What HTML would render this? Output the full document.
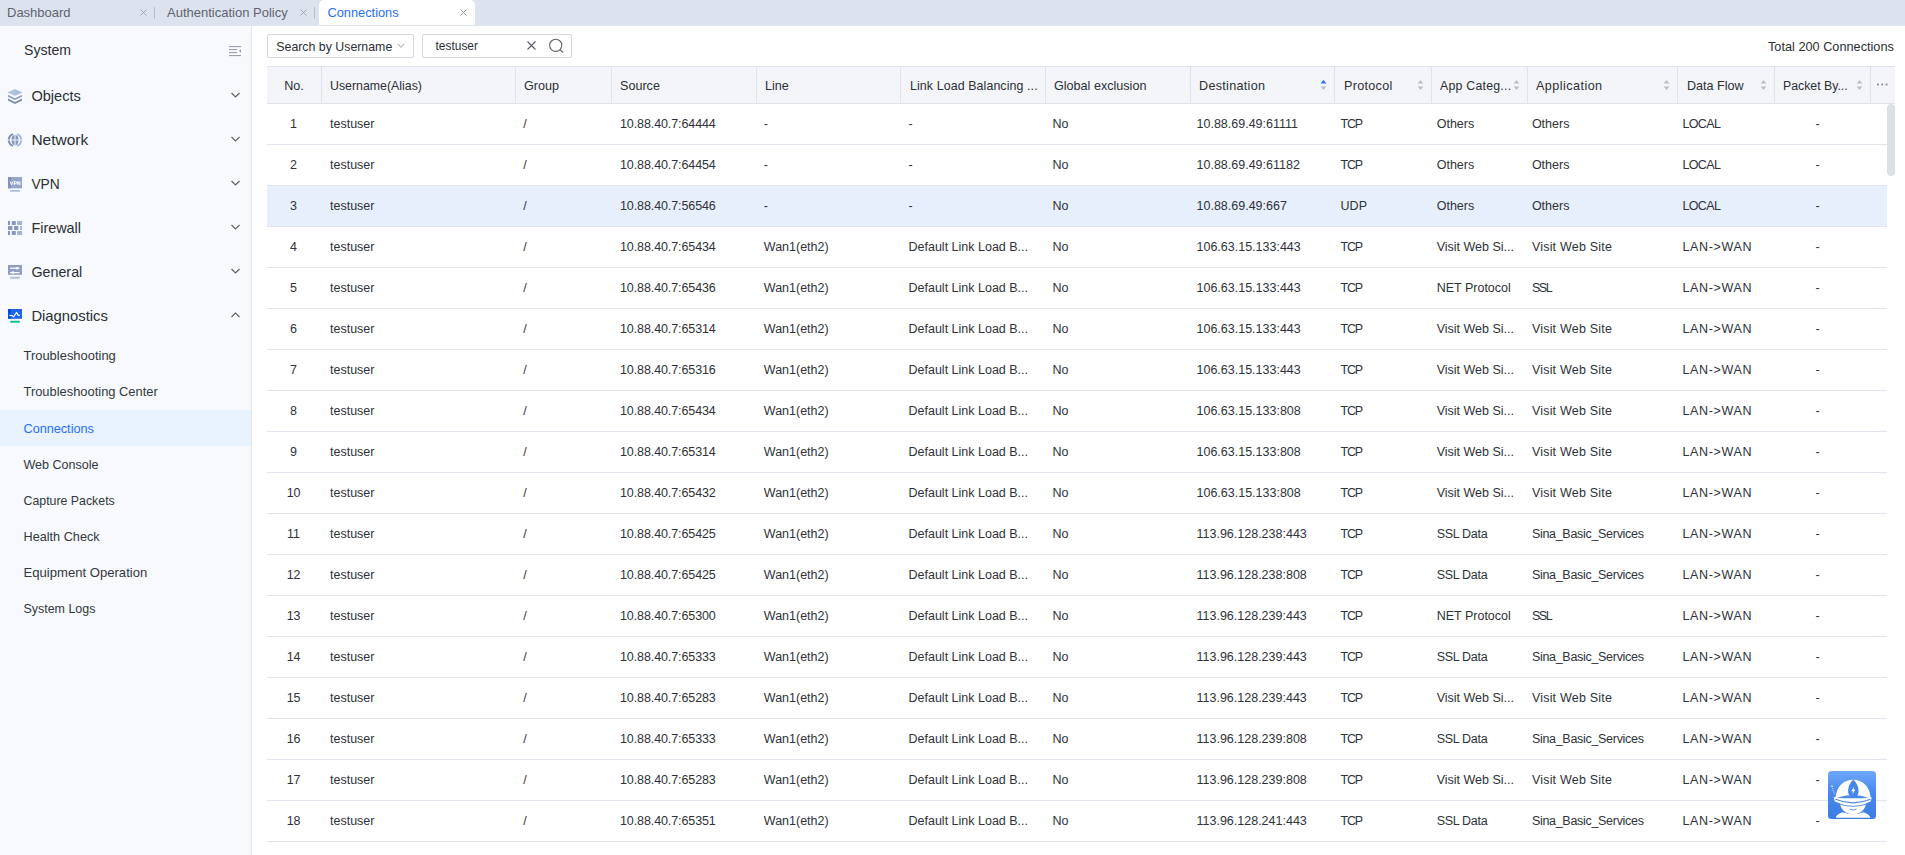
<!DOCTYPE html>
<html><head><meta charset="utf-8"><style>
*{margin:0;padding:0;box-sizing:border-box}
html,body{width:1905px;height:855px;overflow:hidden;background:#fff;font-family:"Liberation Sans",sans-serif;color:#333}
.t{position:absolute;white-space:nowrap}
</style></head><body>
<div style="position:absolute;left:0;top:0;width:1905px;height:25px;background:#dde3ee"></div>
<div style="position:absolute;left:0;top:25px;width:1905px;height:1px;background:#e0e6f1"></div>
<div style="position:absolute;left:319px;top:0;width:156px;height:25px;background:#fff;border-radius:5px 5px 0 0"></div>
<div class="t" style="left:7.00px;top:6.00px;font-size:13px;line-height:13px;color:#5d6470;">Dashboard</div>
<svg style="position:absolute;left:139.5px;top:9px" width="7" height="7" viewBox="0 0 7 7"><path d="M0.5 0.5L6.5 6.5M6.5 0.5L0.5 6.5" stroke="#a3a9b3" stroke-width="1" fill="none"/></svg>
<div style="position:absolute;left:154px;top:7px;width:1px;height:12px;background:#b8bfca"></div>
<div class="t" style="left:167.00px;top:6.00px;font-size:13px;line-height:13px;color:#5d6470;">Authentication Policy</div>
<svg style="position:absolute;left:299.5px;top:9px" width="7" height="7" viewBox="0 0 7 7"><path d="M0.5 0.5L6.5 6.5M6.5 0.5L0.5 6.5" stroke="#a3a9b3" stroke-width="1" fill="none"/></svg>
<div style="position:absolute;left:314px;top:7px;width:1px;height:12px;background:#b8bfca"></div>
<div class="t" style="left:327.50px;top:7.16px;font-size:12.8px;line-height:12.8px;color:#1f6ffb;">Connections</div>
<svg style="position:absolute;left:459.5px;top:9px" width="7" height="7" viewBox="0 0 7 7"><path d="M0.5 0.5L6.5 6.5M6.5 0.5L0.5 6.5" stroke="#8c939e" stroke-width="1" fill="none"/></svg>
<div style="position:absolute;left:0;top:26px;width:251px;height:829px;background:#f7f9fc"></div>
<div style="position:absolute;left:251px;top:26px;width:1px;height:829px;background:#e3e6ed"></div>
<div class="t" style="left:24.00px;top:43.06px;font-size:14.1px;line-height:14.1px;color:#2b2f36;">System</div>
<svg style="position:absolute;left:228px;top:45px" width="14" height="12" viewBox="0 0 14 12"><g fill="#9aa0ad"><rect x="1" y="1" width="12" height="1.1"/><rect x="1" y="4" width="8" height="1.1"/><rect x="1" y="7" width="8" height="1.1"/><rect x="1" y="10" width="12" height="1.1"/><path d="M13 4L11 6L13 8Z"/></g></svg>
<div class="t" style="left:31.40px;top:88.94px;font-size:14.6px;line-height:14.6px;color:#2b2f36;">Objects</div>
<svg style="position:absolute;left:229.5px;top:89.9px" width="11" height="10" viewBox="0 0 11 10"><path d="M1.5 3L5.5 7L9.5 3" stroke="#5b626e" stroke-width="1.2" fill="none"/></svg>
<div class="t" style="left:31.40px;top:132.18px;font-size:15.5px;line-height:15.5px;color:#2b2f36;">Network</div>
<svg style="position:absolute;left:229.5px;top:133.9px" width="11" height="10" viewBox="0 0 11 10"><path d="M1.5 3L5.5 7L9.5 3" stroke="#5b626e" stroke-width="1.2" fill="none"/></svg>
<div class="t" style="left:31.40px;top:177.62px;font-size:13.8px;line-height:13.8px;color:#2b2f36;">VPN</div>
<svg style="position:absolute;left:229.5px;top:177.9px" width="11" height="10" viewBox="0 0 11 10"><path d="M1.5 3L5.5 7L9.5 3" stroke="#5b626e" stroke-width="1.2" fill="none"/></svg>
<div class="t" style="left:31.40px;top:221.11px;font-size:14.4px;line-height:14.4px;color:#2b2f36;">Firewall</div>
<svg style="position:absolute;left:229.5px;top:221.9px" width="11" height="10" viewBox="0 0 11 10"><path d="M1.5 3L5.5 7L9.5 3" stroke="#5b626e" stroke-width="1.2" fill="none"/></svg>
<div class="t" style="left:31.40px;top:265.20px;font-size:14.3px;line-height:14.3px;color:#2b2f36;">General</div>
<svg style="position:absolute;left:229.5px;top:265.9px" width="11" height="10" viewBox="0 0 11 10"><path d="M1.5 3L5.5 7L9.5 3" stroke="#5b626e" stroke-width="1.2" fill="none"/></svg>
<div class="t" style="left:31.40px;top:308.77px;font-size:14.8px;line-height:14.8px;color:#2b2f36;">Diagnostics</div>
<svg style="position:absolute;left:229.5px;top:309.9px" width="11" height="10" viewBox="0 0 11 10"><path d="M1.5 7L5.5 3L9.5 7" stroke="#5b626e" stroke-width="1.2" fill="none"/></svg>
<svg style="position:absolute;left:7px;top:88px" width="16" height="16" viewBox="0 0 16 16"><path d="M8 1L15.5 4.4L8 7.8L0.5 4.4Z" fill="#adc0df"/><path d="M1 6.8L8 10.2L15 6.8L15 8.7L8 12.1L1 8.7Z" fill="#8e9fc3"/><path d="M1 10.6L8 14L15 10.6L15 12.5L8 15.9L1 12.5Z" fill="#7b8bb1"/></svg>
<svg style="position:absolute;left:7px;top:132px" width="16" height="16" viewBox="0 0 16 16"><path d="M6.1 2.1A6.2 6.2 0 0 0 6.1 13.9" stroke="#7d8db3" stroke-width="2" fill="none"/><path d="M9.9 2.1A6.2 6.2 0 0 1 9.9 13.9" stroke="#a6badb" stroke-width="2" fill="none"/><ellipse cx="8" cy="8" rx="3.6" ry="5.3" fill="#8797bb"/><rect x="7.4" y="2" width="1.2" height="12" fill="#e3e8f2"/><rect x="1" y="7.4" width="14" height="1.2" fill="#e3e8f2"/></svg>
<svg style="position:absolute;left:8px;top:177px" width="14" height="16" viewBox="0 0 14 16"><rect x="0" y="0" width="14" height="11.3" fill="#96a6c8"/><rect x="0" y="0" width="3" height="11.3" fill="#8191b7"/><path d="M2.2 4.5L3.5 7.9L4.8 4.5M6.3 7.9V4.6H7.5Q8.6 4.6 8.6 5.6Q8.6 6.6 7.5 6.6H6.3M9.7 7.9V4.5L11.9 7.9V4.5" stroke="#fff" stroke-width="1" fill="none"/><rect x="2" y="13" width="10" height="1.8" rx="0.9" fill="#a9bedf"/></svg>
<svg style="position:absolute;left:8px;top:221px" width="14" height="14" viewBox="0 0 14 14"><g fill="#8898bd"><rect x="0" y="0" width="2" height="4"/><rect x="3.8" y="0" width="4" height="4"/><rect x="9.2" y="0" width="4.8" height="4" fill="#9fb2d6"/><rect x="0" y="5" width="4.4" height="4"/><rect x="6" y="5" width="4.3" height="4"/><rect x="12" y="5" width="2" height="4" fill="#a9bcdc"/><rect x="0" y="10" width="2" height="4"/><rect x="3.8" y="10" width="4" height="4"/><rect x="9.2" y="10" width="4.8" height="4" fill="#9fb2d6"/></g></svg>
<svg style="position:absolute;left:8px;top:265px" width="14" height="15" viewBox="0 0 14 15"><rect x="0" y="0" width="14" height="9.8" fill="#8e9ec2"/><rect x="2" y="2.6" width="9.5" height="1.2" fill="#fff"/><circle cx="9" cy="3.2" r="1.3" fill="#fff"/><rect x="2" y="7" width="9.5" height="1.2" fill="#fff"/><circle cx="5" cy="7.6" r="1.3" fill="#fff"/><rect x="2" y="11.8" width="10" height="2" rx="1" fill="#aabfdf"/></svg>
<svg style="position:absolute;left:8px;top:309px" width="14" height="15" viewBox="0 0 14 15"><rect x="0" y="0" width="14" height="9.8" fill="#1f63f3"/><rect x="0" y="0" width="3" height="9.8" fill="#0b4ddb"/><path d="M1.5 6.4L4.1 6.6L5.7 7.8L8.5 3.4L10.3 6.4L11.9 6.4" stroke="#fff" stroke-width="1.1" fill="none" stroke-linejoin="round"/><rect x="2" y="11.8" width="10" height="2" rx="1" fill="#13c783"/></svg>
<div style="position:absolute;left:0;top:410px;width:251px;height:36px;background:#e8f3fe"></div>
<div class="t" style="left:23.50px;top:350.34px;font-size:12.95px;line-height:12.95px;color:#333840;">Troubleshooting</div>
<div class="t" style="left:23.50px;top:386.38px;font-size:12.9px;line-height:12.9px;color:#333840;">Troubleshooting Center</div>
<div class="t" style="left:23.50px;top:422.58px;font-size:12.66px;line-height:12.66px;color:#1e6ffd;">Connections</div>
<div class="t" style="left:23.50px;top:458.68px;font-size:12.55px;line-height:12.55px;color:#333840;">Web Console</div>
<div class="t" style="left:23.50px;top:494.85px;font-size:12.35px;line-height:12.35px;color:#333840;">Capture Packets</div>
<div class="t" style="left:23.50px;top:530.55px;font-size:12.7px;line-height:12.7px;color:#333840;">Health Check</div>
<div class="t" style="left:23.50px;top:566.21px;font-size:13.1px;line-height:13.1px;color:#333840;">Equipment Operation</div>
<div class="t" style="left:23.50px;top:602.76px;font-size:12.45px;line-height:12.45px;color:#333840;">System Logs</div>
<div style="position:absolute;left:267px;top:34px;width:147px;height:24px;border:1px solid #d5d9e1;border-radius:2px;background:#fff"></div>
<div class="t" style="left:276.30px;top:40.55px;font-size:12.35px;line-height:12.35px;color:#2b2f36;">Search by Username</div>
<svg style="position:absolute;left:397px;top:43px" width="8" height="6" viewBox="0 0 8 6"><path d="M0.8 1L4 4.4L7.2 1" stroke="#9ba1ab" stroke-width="1" fill="none"/></svg>
<div style="position:absolute;left:422px;top:34px;width:150px;height:24px;border:1px solid #d5d9e1;border-radius:2px;background:#fff"></div>
<div class="t" style="left:435.50px;top:41.38px;font-size:11.95px;line-height:11.95px;color:#2b2f36;">testuser</div>
<svg style="position:absolute;left:527px;top:41px" width="9" height="9" viewBox="0 0 9 9"><path d="M0.5 0.5L8.5 8.5M8.5 0.5L0.5 8.5" stroke="#595f69" stroke-width="1.1" fill="none"/></svg>
<svg style="position:absolute;left:548px;top:38px" width="17" height="16" viewBox="0 0 17 16"><circle cx="7.7" cy="7.3" r="6.1" stroke="#60666f" stroke-width="1.1" fill="none"/><path d="M12 11.6L15 14.5" stroke="#60666f" stroke-width="1.2"/></svg>
<div class="t" style="left:1768.00px;top:40.92px;font-size:12.73px;line-height:12.73px;color:#2b2f36;">Total 200 Connections</div>
<div style="position:absolute;left:267px;top:66px;width:1628px;height:38px;background:#f4f5f9;border-top:1px solid #dfe3ec;border-bottom:1px solid #dfe3ec"></div>
<div style="position:absolute;left:321px;top:67px;width:1px;height:36px;background:#dfe3ec"></div>
<div style="position:absolute;left:515px;top:67px;width:1px;height:36px;background:#dfe3ec"></div>
<div style="position:absolute;left:611px;top:67px;width:1px;height:36px;background:#dfe3ec"></div>
<div style="position:absolute;left:756px;top:67px;width:1px;height:36px;background:#dfe3ec"></div>
<div style="position:absolute;left:900px;top:67px;width:1px;height:36px;background:#dfe3ec"></div>
<div style="position:absolute;left:1045px;top:67px;width:1px;height:36px;background:#dfe3ec"></div>
<div style="position:absolute;left:1190px;top:67px;width:1px;height:36px;background:#dfe3ec"></div>
<div style="position:absolute;left:1334px;top:67px;width:1px;height:36px;background:#dfe3ec"></div>
<div style="position:absolute;left:1431px;top:67px;width:1px;height:36px;background:#dfe3ec"></div>
<div style="position:absolute;left:1527px;top:67px;width:1px;height:36px;background:#dfe3ec"></div>
<div style="position:absolute;left:1677px;top:67px;width:1px;height:36px;background:#dfe3ec"></div>
<div style="position:absolute;left:1774px;top:67px;width:1px;height:36px;background:#dfe3ec"></div>
<div style="position:absolute;left:1870px;top:67px;width:1px;height:36px;background:#dfe3ec"></div>
<div class="t" style="left:267.00px;top:79.53px;font-size:12.6px;line-height:12.6px;color:#2b2f36;width:54px;text-align:center;">No.</div>
<div class="t" style="left:330.00px;top:79.75px;font-size:12.35px;line-height:12.35px;color:#2b2f36;">Username(Alias)</div>
<div class="t" style="left:524.00px;top:79.53px;font-size:12.6px;line-height:12.6px;color:#2b2f36;">Group</div>
<div class="t" style="left:620.00px;top:79.53px;font-size:12.6px;line-height:12.6px;color:#2b2f36;">Source</div>
<div class="t" style="left:765.00px;top:79.53px;font-size:12.6px;line-height:12.6px;color:#2b2f36;">Line</div>
<div class="t" style="left:910.00px;top:79.70px;font-size:12.4px;line-height:12.4px;color:#2b2f36;letter-spacing:0.1px;">Link Load Balancing ...</div>
<div class="t" style="left:1054.00px;top:79.53px;font-size:12.6px;line-height:12.6px;color:#2b2f36;">Global exclusion</div>
<div class="t" style="left:1199.00px;top:79.53px;font-size:12.6px;line-height:12.6px;color:#2b2f36;letter-spacing:0.3px;">Destination</div>
<svg style="position:absolute;left:1320px;top:78.6px" width="7" height="12" viewBox="0 0 7 12"><path d="M3.5 1L6.5 4.6H0.5Z" fill="#2f6df6"/><path d="M3.5 11L6.5 7.4H0.5Z" fill="#b9bec7"/></svg>
<div class="t" style="left:1344.00px;top:79.53px;font-size:12.6px;line-height:12.6px;color:#2b2f36;letter-spacing:0.3px;">Protocol</div>
<svg style="position:absolute;left:1417px;top:78.6px" width="7" height="12" viewBox="0 0 7 12"><path d="M3.5 1L6.5 4.6H0.5Z" fill="#b9bec7"/><path d="M3.5 11L6.5 7.4H0.5Z" fill="#b9bec7"/></svg>
<div class="t" style="left:1440.00px;top:79.79px;font-size:12.3px;line-height:12.3px;color:#2b2f36;letter-spacing:0.25px;">App Categ...</div>
<svg style="position:absolute;left:1513px;top:78.6px" width="7" height="12" viewBox="0 0 7 12"><path d="M3.5 1L6.5 4.6H0.5Z" fill="#b9bec7"/><path d="M3.5 11L6.5 7.4H0.5Z" fill="#b9bec7"/></svg>
<div class="t" style="left:1536.00px;top:79.53px;font-size:12.6px;line-height:12.6px;color:#2b2f36;letter-spacing:0.45px;">Application</div>
<svg style="position:absolute;left:1663px;top:78.6px" width="7" height="12" viewBox="0 0 7 12"><path d="M3.5 1L6.5 4.6H0.5Z" fill="#b9bec7"/><path d="M3.5 11L6.5 7.4H0.5Z" fill="#b9bec7"/></svg>
<div class="t" style="left:1687.00px;top:79.53px;font-size:12.6px;line-height:12.6px;color:#2b2f36;">Data Flow</div>
<svg style="position:absolute;left:1760px;top:78.6px" width="7" height="12" viewBox="0 0 7 12"><path d="M3.5 1L6.5 4.6H0.5Z" fill="#b9bec7"/><path d="M3.5 11L6.5 7.4H0.5Z" fill="#b9bec7"/></svg>
<div class="t" style="left:1783.00px;top:79.79px;font-size:12.3px;line-height:12.3px;color:#2b2f36;">Packet By...</div>
<svg style="position:absolute;left:1856px;top:78.6px" width="7" height="12" viewBox="0 0 7 12"><path d="M3.5 1L6.5 4.6H0.5Z" fill="#b9bec7"/><path d="M3.5 11L6.5 7.4H0.5Z" fill="#b9bec7"/></svg>
<svg style="position:absolute;left:1876px;top:83px" width="12" height="3" viewBox="0 0 12 3"><g fill="#80868f"><rect x="1" y="0.6" width="1.8" height="1.8"/><rect x="5.3" y="0.6" width="1.8" height="1.8"/><rect x="9.6" y="0.6" width="1.8" height="1.8"/></g></svg>
<div style="position:absolute;left:267px;top:104px;width:1620px;height:40px;background:#fff"></div>
<div style="position:absolute;left:267px;top:144px;width:1620px;height:1px;background:#e0e4ed"></div>
<div class="t" style="left:273.60px;top:118.12px;font-size:12.5px;line-height:12.5px;color:#2e3239;width:40px;text-align:center;">1</div>
<div class="t" style="left:330.00px;top:118.12px;font-size:12.5px;line-height:12.5px;color:#2e3239;">testuser</div>
<div class="t" style="left:523.30px;top:118.12px;font-size:12.5px;line-height:12.5px;color:#2e3239;">/</div>
<div class="t" style="left:620.00px;top:118.12px;font-size:12.5px;line-height:12.5px;color:#2e3239;letter-spacing:-0.1px;">10.88.40.7:64444</div>
<div class="t" style="left:763.80px;top:118.12px;font-size:12.5px;line-height:12.5px;color:#2e3239;">-</div>
<div class="t" style="left:908.50px;top:118.12px;font-size:12.5px;line-height:12.5px;color:#2e3239;">-</div>
<div class="t" style="left:1052.40px;top:118.12px;font-size:12.5px;line-height:12.5px;color:#2e3239;">No</div>
<div class="t" style="left:1196.50px;top:118.12px;font-size:12.5px;line-height:12.5px;color:#2e3239;">10.88.69.49:61111</div>
<div class="t" style="left:1340.60px;top:118.12px;font-size:12.5px;line-height:12.5px;color:#2e3239;letter-spacing:-1.2px;">TCP</div>
<div class="t" style="left:1436.70px;top:118.12px;font-size:12.5px;line-height:12.5px;color:#2e3239;">Others</div>
<div class="t" style="left:1531.90px;top:118.12px;font-size:12.5px;line-height:12.5px;color:#2e3239;">Others</div>
<div class="t" style="left:1682.40px;top:118.12px;font-size:12.5px;line-height:12.5px;color:#2e3239;letter-spacing:-0.6px;">LOCAL</div>
<div class="t" style="left:1797.50px;top:118.12px;font-size:12.5px;line-height:12.5px;color:#2e3239;width:40px;text-align:center;">-</div>
<div style="position:absolute;left:267px;top:145px;width:1620px;height:40px;background:#fff"></div>
<div style="position:absolute;left:267px;top:185px;width:1620px;height:1px;background:#e0e4ed"></div>
<div class="t" style="left:273.60px;top:159.12px;font-size:12.5px;line-height:12.5px;color:#2e3239;width:40px;text-align:center;">2</div>
<div class="t" style="left:330.00px;top:159.12px;font-size:12.5px;line-height:12.5px;color:#2e3239;">testuser</div>
<div class="t" style="left:523.30px;top:159.12px;font-size:12.5px;line-height:12.5px;color:#2e3239;">/</div>
<div class="t" style="left:620.00px;top:159.12px;font-size:12.5px;line-height:12.5px;color:#2e3239;letter-spacing:-0.1px;">10.88.40.7:64454</div>
<div class="t" style="left:763.80px;top:159.12px;font-size:12.5px;line-height:12.5px;color:#2e3239;">-</div>
<div class="t" style="left:908.50px;top:159.12px;font-size:12.5px;line-height:12.5px;color:#2e3239;">-</div>
<div class="t" style="left:1052.40px;top:159.12px;font-size:12.5px;line-height:12.5px;color:#2e3239;">No</div>
<div class="t" style="left:1196.50px;top:159.12px;font-size:12.5px;line-height:12.5px;color:#2e3239;">10.88.69.49:61182</div>
<div class="t" style="left:1340.60px;top:159.12px;font-size:12.5px;line-height:12.5px;color:#2e3239;letter-spacing:-1.2px;">TCP</div>
<div class="t" style="left:1436.70px;top:159.12px;font-size:12.5px;line-height:12.5px;color:#2e3239;">Others</div>
<div class="t" style="left:1531.90px;top:159.12px;font-size:12.5px;line-height:12.5px;color:#2e3239;">Others</div>
<div class="t" style="left:1682.40px;top:159.12px;font-size:12.5px;line-height:12.5px;color:#2e3239;letter-spacing:-0.6px;">LOCAL</div>
<div class="t" style="left:1797.50px;top:159.12px;font-size:12.5px;line-height:12.5px;color:#2e3239;width:40px;text-align:center;">-</div>
<div style="position:absolute;left:267px;top:186px;width:1620px;height:40px;background:#e8effc"></div>
<div style="position:absolute;left:267px;top:226px;width:1620px;height:1px;background:#e0e4ed"></div>
<div class="t" style="left:273.60px;top:200.12px;font-size:12.5px;line-height:12.5px;color:#2e3239;width:40px;text-align:center;">3</div>
<div class="t" style="left:330.00px;top:200.12px;font-size:12.5px;line-height:12.5px;color:#2e3239;">testuser</div>
<div class="t" style="left:523.30px;top:200.12px;font-size:12.5px;line-height:12.5px;color:#2e3239;">/</div>
<div class="t" style="left:620.00px;top:200.12px;font-size:12.5px;line-height:12.5px;color:#2e3239;letter-spacing:-0.1px;">10.88.40.7:56546</div>
<div class="t" style="left:763.80px;top:200.12px;font-size:12.5px;line-height:12.5px;color:#2e3239;">-</div>
<div class="t" style="left:908.50px;top:200.12px;font-size:12.5px;line-height:12.5px;color:#2e3239;">-</div>
<div class="t" style="left:1052.40px;top:200.12px;font-size:12.5px;line-height:12.5px;color:#2e3239;">No</div>
<div class="t" style="left:1196.50px;top:200.12px;font-size:12.5px;line-height:12.5px;color:#2e3239;">10.88.69.49:667</div>
<div class="t" style="left:1340.60px;top:200.12px;font-size:12.5px;line-height:12.5px;color:#2e3239;">UDP</div>
<div class="t" style="left:1436.70px;top:200.12px;font-size:12.5px;line-height:12.5px;color:#2e3239;">Others</div>
<div class="t" style="left:1531.90px;top:200.12px;font-size:12.5px;line-height:12.5px;color:#2e3239;">Others</div>
<div class="t" style="left:1682.40px;top:200.12px;font-size:12.5px;line-height:12.5px;color:#2e3239;letter-spacing:-0.6px;">LOCAL</div>
<div class="t" style="left:1797.50px;top:200.12px;font-size:12.5px;line-height:12.5px;color:#2e3239;width:40px;text-align:center;">-</div>
<div style="position:absolute;left:267px;top:227px;width:1620px;height:40px;background:#fff"></div>
<div style="position:absolute;left:267px;top:267px;width:1620px;height:1px;background:#e0e4ed"></div>
<div class="t" style="left:273.60px;top:241.12px;font-size:12.5px;line-height:12.5px;color:#2e3239;width:40px;text-align:center;">4</div>
<div class="t" style="left:330.00px;top:241.12px;font-size:12.5px;line-height:12.5px;color:#2e3239;">testuser</div>
<div class="t" style="left:523.30px;top:241.12px;font-size:12.5px;line-height:12.5px;color:#2e3239;">/</div>
<div class="t" style="left:620.00px;top:241.12px;font-size:12.5px;line-height:12.5px;color:#2e3239;letter-spacing:-0.1px;">10.88.40.7:65434</div>
<div class="t" style="left:763.80px;top:241.12px;font-size:12.5px;line-height:12.5px;color:#2e3239;">Wan1(eth2)</div>
<div class="t" style="left:908.50px;top:241.12px;font-size:12.5px;line-height:12.5px;color:#2e3239;">Default Link Load B...</div>
<div class="t" style="left:1052.40px;top:241.12px;font-size:12.5px;line-height:12.5px;color:#2e3239;">No</div>
<div class="t" style="left:1196.50px;top:241.12px;font-size:12.5px;line-height:12.5px;color:#2e3239;">106.63.15.133:443</div>
<div class="t" style="left:1340.60px;top:241.12px;font-size:12.5px;line-height:12.5px;color:#2e3239;letter-spacing:-1.2px;">TCP</div>
<div class="t" style="left:1436.70px;top:241.12px;font-size:12.5px;line-height:12.5px;color:#2e3239;">Visit Web Si...</div>
<div class="t" style="left:1531.90px;top:241.12px;font-size:12.5px;line-height:12.5px;color:#2e3239;letter-spacing:0.2px;">Visit Web Site</div>
<div class="t" style="left:1682.40px;top:241.12px;font-size:12.5px;line-height:12.5px;color:#2e3239;letter-spacing:0.65px;">LAN-&gt;WAN</div>
<div class="t" style="left:1797.50px;top:241.12px;font-size:12.5px;line-height:12.5px;color:#2e3239;width:40px;text-align:center;">-</div>
<div style="position:absolute;left:267px;top:268px;width:1620px;height:40px;background:#fff"></div>
<div style="position:absolute;left:267px;top:308px;width:1620px;height:1px;background:#e0e4ed"></div>
<div class="t" style="left:273.60px;top:282.12px;font-size:12.5px;line-height:12.5px;color:#2e3239;width:40px;text-align:center;">5</div>
<div class="t" style="left:330.00px;top:282.12px;font-size:12.5px;line-height:12.5px;color:#2e3239;">testuser</div>
<div class="t" style="left:523.30px;top:282.12px;font-size:12.5px;line-height:12.5px;color:#2e3239;">/</div>
<div class="t" style="left:620.00px;top:282.12px;font-size:12.5px;line-height:12.5px;color:#2e3239;letter-spacing:-0.1px;">10.88.40.7:65436</div>
<div class="t" style="left:763.80px;top:282.12px;font-size:12.5px;line-height:12.5px;color:#2e3239;">Wan1(eth2)</div>
<div class="t" style="left:908.50px;top:282.12px;font-size:12.5px;line-height:12.5px;color:#2e3239;">Default Link Load B...</div>
<div class="t" style="left:1052.40px;top:282.12px;font-size:12.5px;line-height:12.5px;color:#2e3239;">No</div>
<div class="t" style="left:1196.50px;top:282.12px;font-size:12.5px;line-height:12.5px;color:#2e3239;">106.63.15.133:443</div>
<div class="t" style="left:1340.60px;top:282.12px;font-size:12.5px;line-height:12.5px;color:#2e3239;letter-spacing:-1.2px;">TCP</div>
<div class="t" style="left:1436.70px;top:282.12px;font-size:12.5px;line-height:12.5px;color:#2e3239;">NET Protocol</div>
<div class="t" style="left:1531.90px;top:282.12px;font-size:12.5px;line-height:12.5px;color:#2e3239;letter-spacing:-1.4px;">SSL</div>
<div class="t" style="left:1682.40px;top:282.12px;font-size:12.5px;line-height:12.5px;color:#2e3239;letter-spacing:0.65px;">LAN-&gt;WAN</div>
<div class="t" style="left:1797.50px;top:282.12px;font-size:12.5px;line-height:12.5px;color:#2e3239;width:40px;text-align:center;">-</div>
<div style="position:absolute;left:267px;top:309px;width:1620px;height:40px;background:#fff"></div>
<div style="position:absolute;left:267px;top:349px;width:1620px;height:1px;background:#e0e4ed"></div>
<div class="t" style="left:273.60px;top:323.12px;font-size:12.5px;line-height:12.5px;color:#2e3239;width:40px;text-align:center;">6</div>
<div class="t" style="left:330.00px;top:323.12px;font-size:12.5px;line-height:12.5px;color:#2e3239;">testuser</div>
<div class="t" style="left:523.30px;top:323.12px;font-size:12.5px;line-height:12.5px;color:#2e3239;">/</div>
<div class="t" style="left:620.00px;top:323.12px;font-size:12.5px;line-height:12.5px;color:#2e3239;letter-spacing:-0.1px;">10.88.40.7:65314</div>
<div class="t" style="left:763.80px;top:323.12px;font-size:12.5px;line-height:12.5px;color:#2e3239;">Wan1(eth2)</div>
<div class="t" style="left:908.50px;top:323.12px;font-size:12.5px;line-height:12.5px;color:#2e3239;">Default Link Load B...</div>
<div class="t" style="left:1052.40px;top:323.12px;font-size:12.5px;line-height:12.5px;color:#2e3239;">No</div>
<div class="t" style="left:1196.50px;top:323.12px;font-size:12.5px;line-height:12.5px;color:#2e3239;">106.63.15.133:443</div>
<div class="t" style="left:1340.60px;top:323.12px;font-size:12.5px;line-height:12.5px;color:#2e3239;letter-spacing:-1.2px;">TCP</div>
<div class="t" style="left:1436.70px;top:323.12px;font-size:12.5px;line-height:12.5px;color:#2e3239;">Visit Web Si...</div>
<div class="t" style="left:1531.90px;top:323.12px;font-size:12.5px;line-height:12.5px;color:#2e3239;letter-spacing:0.2px;">Visit Web Site</div>
<div class="t" style="left:1682.40px;top:323.12px;font-size:12.5px;line-height:12.5px;color:#2e3239;letter-spacing:0.65px;">LAN-&gt;WAN</div>
<div class="t" style="left:1797.50px;top:323.12px;font-size:12.5px;line-height:12.5px;color:#2e3239;width:40px;text-align:center;">-</div>
<div style="position:absolute;left:267px;top:350px;width:1620px;height:40px;background:#fff"></div>
<div style="position:absolute;left:267px;top:390px;width:1620px;height:1px;background:#e0e4ed"></div>
<div class="t" style="left:273.60px;top:364.12px;font-size:12.5px;line-height:12.5px;color:#2e3239;width:40px;text-align:center;">7</div>
<div class="t" style="left:330.00px;top:364.12px;font-size:12.5px;line-height:12.5px;color:#2e3239;">testuser</div>
<div class="t" style="left:523.30px;top:364.12px;font-size:12.5px;line-height:12.5px;color:#2e3239;">/</div>
<div class="t" style="left:620.00px;top:364.12px;font-size:12.5px;line-height:12.5px;color:#2e3239;letter-spacing:-0.1px;">10.88.40.7:65316</div>
<div class="t" style="left:763.80px;top:364.12px;font-size:12.5px;line-height:12.5px;color:#2e3239;">Wan1(eth2)</div>
<div class="t" style="left:908.50px;top:364.12px;font-size:12.5px;line-height:12.5px;color:#2e3239;">Default Link Load B...</div>
<div class="t" style="left:1052.40px;top:364.12px;font-size:12.5px;line-height:12.5px;color:#2e3239;">No</div>
<div class="t" style="left:1196.50px;top:364.12px;font-size:12.5px;line-height:12.5px;color:#2e3239;">106.63.15.133:443</div>
<div class="t" style="left:1340.60px;top:364.12px;font-size:12.5px;line-height:12.5px;color:#2e3239;letter-spacing:-1.2px;">TCP</div>
<div class="t" style="left:1436.70px;top:364.12px;font-size:12.5px;line-height:12.5px;color:#2e3239;">Visit Web Si...</div>
<div class="t" style="left:1531.90px;top:364.12px;font-size:12.5px;line-height:12.5px;color:#2e3239;letter-spacing:0.2px;">Visit Web Site</div>
<div class="t" style="left:1682.40px;top:364.12px;font-size:12.5px;line-height:12.5px;color:#2e3239;letter-spacing:0.65px;">LAN-&gt;WAN</div>
<div class="t" style="left:1797.50px;top:364.12px;font-size:12.5px;line-height:12.5px;color:#2e3239;width:40px;text-align:center;">-</div>
<div style="position:absolute;left:267px;top:391px;width:1620px;height:40px;background:#fff"></div>
<div style="position:absolute;left:267px;top:431px;width:1620px;height:1px;background:#e0e4ed"></div>
<div class="t" style="left:273.60px;top:405.12px;font-size:12.5px;line-height:12.5px;color:#2e3239;width:40px;text-align:center;">8</div>
<div class="t" style="left:330.00px;top:405.12px;font-size:12.5px;line-height:12.5px;color:#2e3239;">testuser</div>
<div class="t" style="left:523.30px;top:405.12px;font-size:12.5px;line-height:12.5px;color:#2e3239;">/</div>
<div class="t" style="left:620.00px;top:405.12px;font-size:12.5px;line-height:12.5px;color:#2e3239;letter-spacing:-0.1px;">10.88.40.7:65434</div>
<div class="t" style="left:763.80px;top:405.12px;font-size:12.5px;line-height:12.5px;color:#2e3239;">Wan1(eth2)</div>
<div class="t" style="left:908.50px;top:405.12px;font-size:12.5px;line-height:12.5px;color:#2e3239;">Default Link Load B...</div>
<div class="t" style="left:1052.40px;top:405.12px;font-size:12.5px;line-height:12.5px;color:#2e3239;">No</div>
<div class="t" style="left:1196.50px;top:405.12px;font-size:12.5px;line-height:12.5px;color:#2e3239;">106.63.15.133:808</div>
<div class="t" style="left:1340.60px;top:405.12px;font-size:12.5px;line-height:12.5px;color:#2e3239;letter-spacing:-1.2px;">TCP</div>
<div class="t" style="left:1436.70px;top:405.12px;font-size:12.5px;line-height:12.5px;color:#2e3239;">Visit Web Si...</div>
<div class="t" style="left:1531.90px;top:405.12px;font-size:12.5px;line-height:12.5px;color:#2e3239;letter-spacing:0.2px;">Visit Web Site</div>
<div class="t" style="left:1682.40px;top:405.12px;font-size:12.5px;line-height:12.5px;color:#2e3239;letter-spacing:0.65px;">LAN-&gt;WAN</div>
<div class="t" style="left:1797.50px;top:405.12px;font-size:12.5px;line-height:12.5px;color:#2e3239;width:40px;text-align:center;">-</div>
<div style="position:absolute;left:267px;top:432px;width:1620px;height:40px;background:#fff"></div>
<div style="position:absolute;left:267px;top:472px;width:1620px;height:1px;background:#e0e4ed"></div>
<div class="t" style="left:273.60px;top:446.12px;font-size:12.5px;line-height:12.5px;color:#2e3239;width:40px;text-align:center;">9</div>
<div class="t" style="left:330.00px;top:446.12px;font-size:12.5px;line-height:12.5px;color:#2e3239;">testuser</div>
<div class="t" style="left:523.30px;top:446.12px;font-size:12.5px;line-height:12.5px;color:#2e3239;">/</div>
<div class="t" style="left:620.00px;top:446.12px;font-size:12.5px;line-height:12.5px;color:#2e3239;letter-spacing:-0.1px;">10.88.40.7:65314</div>
<div class="t" style="left:763.80px;top:446.12px;font-size:12.5px;line-height:12.5px;color:#2e3239;">Wan1(eth2)</div>
<div class="t" style="left:908.50px;top:446.12px;font-size:12.5px;line-height:12.5px;color:#2e3239;">Default Link Load B...</div>
<div class="t" style="left:1052.40px;top:446.12px;font-size:12.5px;line-height:12.5px;color:#2e3239;">No</div>
<div class="t" style="left:1196.50px;top:446.12px;font-size:12.5px;line-height:12.5px;color:#2e3239;">106.63.15.133:808</div>
<div class="t" style="left:1340.60px;top:446.12px;font-size:12.5px;line-height:12.5px;color:#2e3239;letter-spacing:-1.2px;">TCP</div>
<div class="t" style="left:1436.70px;top:446.12px;font-size:12.5px;line-height:12.5px;color:#2e3239;">Visit Web Si...</div>
<div class="t" style="left:1531.90px;top:446.12px;font-size:12.5px;line-height:12.5px;color:#2e3239;letter-spacing:0.2px;">Visit Web Site</div>
<div class="t" style="left:1682.40px;top:446.12px;font-size:12.5px;line-height:12.5px;color:#2e3239;letter-spacing:0.65px;">LAN-&gt;WAN</div>
<div class="t" style="left:1797.50px;top:446.12px;font-size:12.5px;line-height:12.5px;color:#2e3239;width:40px;text-align:center;">-</div>
<div style="position:absolute;left:267px;top:473px;width:1620px;height:40px;background:#fff"></div>
<div style="position:absolute;left:267px;top:513px;width:1620px;height:1px;background:#e0e4ed"></div>
<div class="t" style="left:273.60px;top:487.12px;font-size:12.5px;line-height:12.5px;color:#2e3239;width:40px;text-align:center;">10</div>
<div class="t" style="left:330.00px;top:487.12px;font-size:12.5px;line-height:12.5px;color:#2e3239;">testuser</div>
<div class="t" style="left:523.30px;top:487.12px;font-size:12.5px;line-height:12.5px;color:#2e3239;">/</div>
<div class="t" style="left:620.00px;top:487.12px;font-size:12.5px;line-height:12.5px;color:#2e3239;letter-spacing:-0.1px;">10.88.40.7:65432</div>
<div class="t" style="left:763.80px;top:487.12px;font-size:12.5px;line-height:12.5px;color:#2e3239;">Wan1(eth2)</div>
<div class="t" style="left:908.50px;top:487.12px;font-size:12.5px;line-height:12.5px;color:#2e3239;">Default Link Load B...</div>
<div class="t" style="left:1052.40px;top:487.12px;font-size:12.5px;line-height:12.5px;color:#2e3239;">No</div>
<div class="t" style="left:1196.50px;top:487.12px;font-size:12.5px;line-height:12.5px;color:#2e3239;">106.63.15.133:808</div>
<div class="t" style="left:1340.60px;top:487.12px;font-size:12.5px;line-height:12.5px;color:#2e3239;letter-spacing:-1.2px;">TCP</div>
<div class="t" style="left:1436.70px;top:487.12px;font-size:12.5px;line-height:12.5px;color:#2e3239;">Visit Web Si...</div>
<div class="t" style="left:1531.90px;top:487.12px;font-size:12.5px;line-height:12.5px;color:#2e3239;letter-spacing:0.2px;">Visit Web Site</div>
<div class="t" style="left:1682.40px;top:487.12px;font-size:12.5px;line-height:12.5px;color:#2e3239;letter-spacing:0.65px;">LAN-&gt;WAN</div>
<div class="t" style="left:1797.50px;top:487.12px;font-size:12.5px;line-height:12.5px;color:#2e3239;width:40px;text-align:center;">-</div>
<div style="position:absolute;left:267px;top:514px;width:1620px;height:40px;background:#fff"></div>
<div style="position:absolute;left:267px;top:554px;width:1620px;height:1px;background:#e0e4ed"></div>
<div class="t" style="left:273.60px;top:528.12px;font-size:12.5px;line-height:12.5px;color:#2e3239;width:40px;text-align:center;">11</div>
<div class="t" style="left:330.00px;top:528.12px;font-size:12.5px;line-height:12.5px;color:#2e3239;">testuser</div>
<div class="t" style="left:523.30px;top:528.12px;font-size:12.5px;line-height:12.5px;color:#2e3239;">/</div>
<div class="t" style="left:620.00px;top:528.12px;font-size:12.5px;line-height:12.5px;color:#2e3239;letter-spacing:-0.1px;">10.88.40.7:65425</div>
<div class="t" style="left:763.80px;top:528.12px;font-size:12.5px;line-height:12.5px;color:#2e3239;">Wan1(eth2)</div>
<div class="t" style="left:908.50px;top:528.12px;font-size:12.5px;line-height:12.5px;color:#2e3239;">Default Link Load B...</div>
<div class="t" style="left:1052.40px;top:528.12px;font-size:12.5px;line-height:12.5px;color:#2e3239;">No</div>
<div class="t" style="left:1196.50px;top:528.12px;font-size:12.5px;line-height:12.5px;color:#2e3239;">113.96.128.238:443</div>
<div class="t" style="left:1340.60px;top:528.12px;font-size:12.5px;line-height:12.5px;color:#2e3239;letter-spacing:-1.2px;">TCP</div>
<div class="t" style="left:1436.70px;top:528.12px;font-size:12.5px;line-height:12.5px;color:#2e3239;letter-spacing:-0.3px;">SSL Data</div>
<div class="t" style="left:1531.90px;top:528.12px;font-size:12.5px;line-height:12.5px;color:#2e3239;letter-spacing:-0.3px;">Sina_Basic_Services</div>
<div class="t" style="left:1682.40px;top:528.12px;font-size:12.5px;line-height:12.5px;color:#2e3239;letter-spacing:0.65px;">LAN-&gt;WAN</div>
<div class="t" style="left:1797.50px;top:528.12px;font-size:12.5px;line-height:12.5px;color:#2e3239;width:40px;text-align:center;">-</div>
<div style="position:absolute;left:267px;top:555px;width:1620px;height:40px;background:#fff"></div>
<div style="position:absolute;left:267px;top:595px;width:1620px;height:1px;background:#e0e4ed"></div>
<div class="t" style="left:273.60px;top:569.12px;font-size:12.5px;line-height:12.5px;color:#2e3239;width:40px;text-align:center;">12</div>
<div class="t" style="left:330.00px;top:569.12px;font-size:12.5px;line-height:12.5px;color:#2e3239;">testuser</div>
<div class="t" style="left:523.30px;top:569.12px;font-size:12.5px;line-height:12.5px;color:#2e3239;">/</div>
<div class="t" style="left:620.00px;top:569.12px;font-size:12.5px;line-height:12.5px;color:#2e3239;letter-spacing:-0.1px;">10.88.40.7:65425</div>
<div class="t" style="left:763.80px;top:569.12px;font-size:12.5px;line-height:12.5px;color:#2e3239;">Wan1(eth2)</div>
<div class="t" style="left:908.50px;top:569.12px;font-size:12.5px;line-height:12.5px;color:#2e3239;">Default Link Load B...</div>
<div class="t" style="left:1052.40px;top:569.12px;font-size:12.5px;line-height:12.5px;color:#2e3239;">No</div>
<div class="t" style="left:1196.50px;top:569.12px;font-size:12.5px;line-height:12.5px;color:#2e3239;">113.96.128.238:808</div>
<div class="t" style="left:1340.60px;top:569.12px;font-size:12.5px;line-height:12.5px;color:#2e3239;letter-spacing:-1.2px;">TCP</div>
<div class="t" style="left:1436.70px;top:569.12px;font-size:12.5px;line-height:12.5px;color:#2e3239;letter-spacing:-0.3px;">SSL Data</div>
<div class="t" style="left:1531.90px;top:569.12px;font-size:12.5px;line-height:12.5px;color:#2e3239;letter-spacing:-0.3px;">Sina_Basic_Services</div>
<div class="t" style="left:1682.40px;top:569.12px;font-size:12.5px;line-height:12.5px;color:#2e3239;letter-spacing:0.65px;">LAN-&gt;WAN</div>
<div class="t" style="left:1797.50px;top:569.12px;font-size:12.5px;line-height:12.5px;color:#2e3239;width:40px;text-align:center;">-</div>
<div style="position:absolute;left:267px;top:596px;width:1620px;height:40px;background:#fff"></div>
<div style="position:absolute;left:267px;top:636px;width:1620px;height:1px;background:#e0e4ed"></div>
<div class="t" style="left:273.60px;top:610.12px;font-size:12.5px;line-height:12.5px;color:#2e3239;width:40px;text-align:center;">13</div>
<div class="t" style="left:330.00px;top:610.12px;font-size:12.5px;line-height:12.5px;color:#2e3239;">testuser</div>
<div class="t" style="left:523.30px;top:610.12px;font-size:12.5px;line-height:12.5px;color:#2e3239;">/</div>
<div class="t" style="left:620.00px;top:610.12px;font-size:12.5px;line-height:12.5px;color:#2e3239;letter-spacing:-0.1px;">10.88.40.7:65300</div>
<div class="t" style="left:763.80px;top:610.12px;font-size:12.5px;line-height:12.5px;color:#2e3239;">Wan1(eth2)</div>
<div class="t" style="left:908.50px;top:610.12px;font-size:12.5px;line-height:12.5px;color:#2e3239;">Default Link Load B...</div>
<div class="t" style="left:1052.40px;top:610.12px;font-size:12.5px;line-height:12.5px;color:#2e3239;">No</div>
<div class="t" style="left:1196.50px;top:610.12px;font-size:12.5px;line-height:12.5px;color:#2e3239;">113.96.128.239:443</div>
<div class="t" style="left:1340.60px;top:610.12px;font-size:12.5px;line-height:12.5px;color:#2e3239;letter-spacing:-1.2px;">TCP</div>
<div class="t" style="left:1436.70px;top:610.12px;font-size:12.5px;line-height:12.5px;color:#2e3239;">NET Protocol</div>
<div class="t" style="left:1531.90px;top:610.12px;font-size:12.5px;line-height:12.5px;color:#2e3239;letter-spacing:-1.4px;">SSL</div>
<div class="t" style="left:1682.40px;top:610.12px;font-size:12.5px;line-height:12.5px;color:#2e3239;letter-spacing:0.65px;">LAN-&gt;WAN</div>
<div class="t" style="left:1797.50px;top:610.12px;font-size:12.5px;line-height:12.5px;color:#2e3239;width:40px;text-align:center;">-</div>
<div style="position:absolute;left:267px;top:637px;width:1620px;height:40px;background:#fff"></div>
<div style="position:absolute;left:267px;top:677px;width:1620px;height:1px;background:#e0e4ed"></div>
<div class="t" style="left:273.60px;top:651.12px;font-size:12.5px;line-height:12.5px;color:#2e3239;width:40px;text-align:center;">14</div>
<div class="t" style="left:330.00px;top:651.12px;font-size:12.5px;line-height:12.5px;color:#2e3239;">testuser</div>
<div class="t" style="left:523.30px;top:651.12px;font-size:12.5px;line-height:12.5px;color:#2e3239;">/</div>
<div class="t" style="left:620.00px;top:651.12px;font-size:12.5px;line-height:12.5px;color:#2e3239;letter-spacing:-0.1px;">10.88.40.7:65333</div>
<div class="t" style="left:763.80px;top:651.12px;font-size:12.5px;line-height:12.5px;color:#2e3239;">Wan1(eth2)</div>
<div class="t" style="left:908.50px;top:651.12px;font-size:12.5px;line-height:12.5px;color:#2e3239;">Default Link Load B...</div>
<div class="t" style="left:1052.40px;top:651.12px;font-size:12.5px;line-height:12.5px;color:#2e3239;">No</div>
<div class="t" style="left:1196.50px;top:651.12px;font-size:12.5px;line-height:12.5px;color:#2e3239;">113.96.128.239:443</div>
<div class="t" style="left:1340.60px;top:651.12px;font-size:12.5px;line-height:12.5px;color:#2e3239;letter-spacing:-1.2px;">TCP</div>
<div class="t" style="left:1436.70px;top:651.12px;font-size:12.5px;line-height:12.5px;color:#2e3239;letter-spacing:-0.3px;">SSL Data</div>
<div class="t" style="left:1531.90px;top:651.12px;font-size:12.5px;line-height:12.5px;color:#2e3239;letter-spacing:-0.3px;">Sina_Basic_Services</div>
<div class="t" style="left:1682.40px;top:651.12px;font-size:12.5px;line-height:12.5px;color:#2e3239;letter-spacing:0.65px;">LAN-&gt;WAN</div>
<div class="t" style="left:1797.50px;top:651.12px;font-size:12.5px;line-height:12.5px;color:#2e3239;width:40px;text-align:center;">-</div>
<div style="position:absolute;left:267px;top:678px;width:1620px;height:40px;background:#fff"></div>
<div style="position:absolute;left:267px;top:718px;width:1620px;height:1px;background:#e0e4ed"></div>
<div class="t" style="left:273.60px;top:692.12px;font-size:12.5px;line-height:12.5px;color:#2e3239;width:40px;text-align:center;">15</div>
<div class="t" style="left:330.00px;top:692.12px;font-size:12.5px;line-height:12.5px;color:#2e3239;">testuser</div>
<div class="t" style="left:523.30px;top:692.12px;font-size:12.5px;line-height:12.5px;color:#2e3239;">/</div>
<div class="t" style="left:620.00px;top:692.12px;font-size:12.5px;line-height:12.5px;color:#2e3239;letter-spacing:-0.1px;">10.88.40.7:65283</div>
<div class="t" style="left:763.80px;top:692.12px;font-size:12.5px;line-height:12.5px;color:#2e3239;">Wan1(eth2)</div>
<div class="t" style="left:908.50px;top:692.12px;font-size:12.5px;line-height:12.5px;color:#2e3239;">Default Link Load B...</div>
<div class="t" style="left:1052.40px;top:692.12px;font-size:12.5px;line-height:12.5px;color:#2e3239;">No</div>
<div class="t" style="left:1196.50px;top:692.12px;font-size:12.5px;line-height:12.5px;color:#2e3239;">113.96.128.239:443</div>
<div class="t" style="left:1340.60px;top:692.12px;font-size:12.5px;line-height:12.5px;color:#2e3239;letter-spacing:-1.2px;">TCP</div>
<div class="t" style="left:1436.70px;top:692.12px;font-size:12.5px;line-height:12.5px;color:#2e3239;">Visit Web Si...</div>
<div class="t" style="left:1531.90px;top:692.12px;font-size:12.5px;line-height:12.5px;color:#2e3239;letter-spacing:0.2px;">Visit Web Site</div>
<div class="t" style="left:1682.40px;top:692.12px;font-size:12.5px;line-height:12.5px;color:#2e3239;letter-spacing:0.65px;">LAN-&gt;WAN</div>
<div class="t" style="left:1797.50px;top:692.12px;font-size:12.5px;line-height:12.5px;color:#2e3239;width:40px;text-align:center;">-</div>
<div style="position:absolute;left:267px;top:719px;width:1620px;height:40px;background:#fff"></div>
<div style="position:absolute;left:267px;top:759px;width:1620px;height:1px;background:#e0e4ed"></div>
<div class="t" style="left:273.60px;top:733.12px;font-size:12.5px;line-height:12.5px;color:#2e3239;width:40px;text-align:center;">16</div>
<div class="t" style="left:330.00px;top:733.12px;font-size:12.5px;line-height:12.5px;color:#2e3239;">testuser</div>
<div class="t" style="left:523.30px;top:733.12px;font-size:12.5px;line-height:12.5px;color:#2e3239;">/</div>
<div class="t" style="left:620.00px;top:733.12px;font-size:12.5px;line-height:12.5px;color:#2e3239;letter-spacing:-0.1px;">10.88.40.7:65333</div>
<div class="t" style="left:763.80px;top:733.12px;font-size:12.5px;line-height:12.5px;color:#2e3239;">Wan1(eth2)</div>
<div class="t" style="left:908.50px;top:733.12px;font-size:12.5px;line-height:12.5px;color:#2e3239;">Default Link Load B...</div>
<div class="t" style="left:1052.40px;top:733.12px;font-size:12.5px;line-height:12.5px;color:#2e3239;">No</div>
<div class="t" style="left:1196.50px;top:733.12px;font-size:12.5px;line-height:12.5px;color:#2e3239;">113.96.128.239:808</div>
<div class="t" style="left:1340.60px;top:733.12px;font-size:12.5px;line-height:12.5px;color:#2e3239;letter-spacing:-1.2px;">TCP</div>
<div class="t" style="left:1436.70px;top:733.12px;font-size:12.5px;line-height:12.5px;color:#2e3239;letter-spacing:-0.3px;">SSL Data</div>
<div class="t" style="left:1531.90px;top:733.12px;font-size:12.5px;line-height:12.5px;color:#2e3239;letter-spacing:-0.3px;">Sina_Basic_Services</div>
<div class="t" style="left:1682.40px;top:733.12px;font-size:12.5px;line-height:12.5px;color:#2e3239;letter-spacing:0.65px;">LAN-&gt;WAN</div>
<div class="t" style="left:1797.50px;top:733.12px;font-size:12.5px;line-height:12.5px;color:#2e3239;width:40px;text-align:center;">-</div>
<div style="position:absolute;left:267px;top:760px;width:1620px;height:40px;background:#fff"></div>
<div style="position:absolute;left:267px;top:800px;width:1620px;height:1px;background:#e0e4ed"></div>
<div class="t" style="left:273.60px;top:774.12px;font-size:12.5px;line-height:12.5px;color:#2e3239;width:40px;text-align:center;">17</div>
<div class="t" style="left:330.00px;top:774.12px;font-size:12.5px;line-height:12.5px;color:#2e3239;">testuser</div>
<div class="t" style="left:523.30px;top:774.12px;font-size:12.5px;line-height:12.5px;color:#2e3239;">/</div>
<div class="t" style="left:620.00px;top:774.12px;font-size:12.5px;line-height:12.5px;color:#2e3239;letter-spacing:-0.1px;">10.88.40.7:65283</div>
<div class="t" style="left:763.80px;top:774.12px;font-size:12.5px;line-height:12.5px;color:#2e3239;">Wan1(eth2)</div>
<div class="t" style="left:908.50px;top:774.12px;font-size:12.5px;line-height:12.5px;color:#2e3239;">Default Link Load B...</div>
<div class="t" style="left:1052.40px;top:774.12px;font-size:12.5px;line-height:12.5px;color:#2e3239;">No</div>
<div class="t" style="left:1196.50px;top:774.12px;font-size:12.5px;line-height:12.5px;color:#2e3239;">113.96.128.239:808</div>
<div class="t" style="left:1340.60px;top:774.12px;font-size:12.5px;line-height:12.5px;color:#2e3239;letter-spacing:-1.2px;">TCP</div>
<div class="t" style="left:1436.70px;top:774.12px;font-size:12.5px;line-height:12.5px;color:#2e3239;">Visit Web Si...</div>
<div class="t" style="left:1531.90px;top:774.12px;font-size:12.5px;line-height:12.5px;color:#2e3239;letter-spacing:0.2px;">Visit Web Site</div>
<div class="t" style="left:1682.40px;top:774.12px;font-size:12.5px;line-height:12.5px;color:#2e3239;letter-spacing:0.65px;">LAN-&gt;WAN</div>
<div class="t" style="left:1797.50px;top:774.12px;font-size:12.5px;line-height:12.5px;color:#2e3239;width:40px;text-align:center;">-</div>
<div style="position:absolute;left:267px;top:801px;width:1620px;height:40px;background:#fff"></div>
<div style="position:absolute;left:267px;top:841px;width:1620px;height:1px;background:#e0e4ed"></div>
<div class="t" style="left:273.60px;top:815.12px;font-size:12.5px;line-height:12.5px;color:#2e3239;width:40px;text-align:center;">18</div>
<div class="t" style="left:330.00px;top:815.12px;font-size:12.5px;line-height:12.5px;color:#2e3239;">testuser</div>
<div class="t" style="left:523.30px;top:815.12px;font-size:12.5px;line-height:12.5px;color:#2e3239;">/</div>
<div class="t" style="left:620.00px;top:815.12px;font-size:12.5px;line-height:12.5px;color:#2e3239;letter-spacing:-0.1px;">10.88.40.7:65351</div>
<div class="t" style="left:763.80px;top:815.12px;font-size:12.5px;line-height:12.5px;color:#2e3239;">Wan1(eth2)</div>
<div class="t" style="left:908.50px;top:815.12px;font-size:12.5px;line-height:12.5px;color:#2e3239;">Default Link Load B...</div>
<div class="t" style="left:1052.40px;top:815.12px;font-size:12.5px;line-height:12.5px;color:#2e3239;">No</div>
<div class="t" style="left:1196.50px;top:815.12px;font-size:12.5px;line-height:12.5px;color:#2e3239;">113.96.128.241:443</div>
<div class="t" style="left:1340.60px;top:815.12px;font-size:12.5px;line-height:12.5px;color:#2e3239;letter-spacing:-1.2px;">TCP</div>
<div class="t" style="left:1436.70px;top:815.12px;font-size:12.5px;line-height:12.5px;color:#2e3239;letter-spacing:-0.3px;">SSL Data</div>
<div class="t" style="left:1531.90px;top:815.12px;font-size:12.5px;line-height:12.5px;color:#2e3239;letter-spacing:-0.3px;">Sina_Basic_Services</div>
<div class="t" style="left:1682.40px;top:815.12px;font-size:12.5px;line-height:12.5px;color:#2e3239;letter-spacing:0.65px;">LAN-&gt;WAN</div>
<div class="t" style="left:1797.50px;top:815.12px;font-size:12.5px;line-height:12.5px;color:#2e3239;width:40px;text-align:center;">-</div>
<div style="position:absolute;left:1887px;top:104px;width:8px;height:71.5px;border-radius:4px;background:#dcdfe5"></div>
<svg style="position:absolute;left:1828px;top:771px" width="48" height="48" viewBox="0 0 48 48">
<defs><linearGradient id="g" x1="0" y1="0" x2="0" y2="1"><stop offset="0" stop-color="#6da7fa"/><stop offset="0.45" stop-color="#4a89ec"/><stop offset="1" stop-color="#3b7de2"/></linearGradient>
<clipPath id="cp"><rect x="0" y="0" width="48" height="48" rx="3.5"/></clipPath></defs>
<rect x="0" y="0" width="48" height="48" rx="3.5" fill="url(#g)"/>
<g clip-path="url(#cp)">
<path d="M7.8 46.8Q9 40.6 25 40.6Q41 40.6 42.3 46.8Z" fill="#fff"/>
<path d="M14 40.2Q25 45.2 36 40.2" stroke="#4686ea" stroke-width="1.1" fill="none"/>
</g>
<path d="M7.8 26A17.3 17.3 0 0 1 42.4 26Z" fill="#fff"/>
<path d="M11.5 30Q13 43 25 43.3Q37 43 38.6 30Z" fill="#fff"/>
<path d="M5.6 26.5Q25 17.5 43.8 26.5L42.5 30.5Q25 39 7 30.5Z" fill="#fff"/>
<path d="M8.5 27Q25 21 40.8 27Q25 27.5 8.5 27Z" fill="#4a89ec"/>
<path d="M7.5 28.3Q25 35.5 42.5 28.3" stroke="#4a89ec" stroke-width="1.1" fill="none"/>
<path d="M9 32.2Q25 38.5 41 32.2" stroke="#4a89ec" stroke-width="0.9" fill="none"/>
<path d="M25.3 8.7C23 10.5 20.1 15 20.1 20C20.1 24 22.4 26.6 25.3 26.6C28.2 26.6 30.6 24 30.6 20C30.6 15 27.6 10.5 25.3 8.7Z" fill="#4686ea"/>
<path d="M26.3 15.4L23.2 20.3H25.1L24.2 23.6L27.4 18.6H25.4Z" fill="#fff"/>
<path d="M21.8 38Q25.2 40.3 28.6 38" stroke="#4686ea" stroke-width="0.9" fill="none"/>
<circle cx="4" cy="15.2" r="0.8" fill="#fff"/>
<path d="M4.4 17L6.6 24" stroke="#fff" stroke-width="0.6" stroke-dasharray="1.4 0.9"/>
</svg>
</body></html>
